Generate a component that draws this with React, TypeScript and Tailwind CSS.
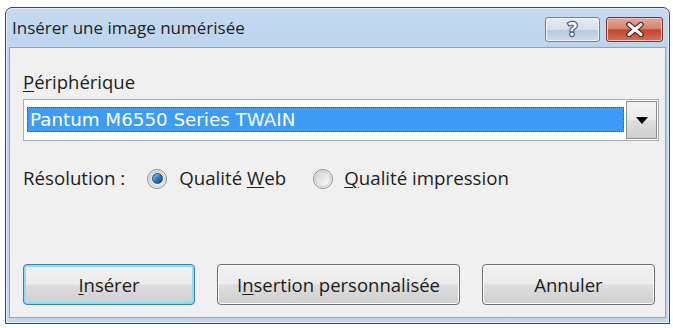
import React from "react";

const ui = { fontFamily: '"Open Sans", "Noto Sans", sans-serif' };
const tahoma = { fontFamily: '"DejaVu Sans", Verdana, sans-serif' };

function Radio({ checked }: { checked?: boolean }) {
  return (
    <span className="flex h-[20px] w-[20px] items-center justify-center rounded-full border border-[#8e8f8f] bg-gradient-to-br from-[#e2e2e2] to-[#f8f8f8]">
      <span className="flex h-[16px] w-[16px] items-center justify-center rounded-full border border-[#c9c9c9] bg-gradient-to-br from-[#d4d4d4] to-[#fdfdfd]">
        {checked && (
          <span className="h-[11px] w-[11px] rounded-full border border-[#174f7f] bg-gradient-to-br from-[#8dd0f8] via-[#2a7fc4] to-[#0f4a80]" />
        )}
      </span>
    </span>
  );
}

function Button({
  children,
  width,
  primary,
}: {
  children: React.ReactNode;
  width: string;
  primary?: boolean;
}) {
  return (
    <div
      className={`${width} flex h-[41px] shrink-0 items-center justify-center rounded-[4px] border ${
        primary ? "border-[#3c7fb1] shadow-[inset_0_0_0_2px_#8fdcf6]" : "border-[#707070] shadow-[inset_0_0_0_1px_#fbfbfb]"
      } bg-[linear-gradient(to_bottom,#f2f2f2_0%,#ebebeb_48%,#dddddd_52%,#cfcfcf_100%)] text-[18.5px] text-[#1c1c1c]`}
      style={ui}
    >
      {children}
    </div>
  );
}

export default function App() {
  return (
    <div className="h-[328px] w-[673px] bg-white pl-[5px] pt-[7px]">
      <div className="flex h-[317px] w-[665px] flex-col rounded-t-[7px] border border-[#34495c] bg-[linear-gradient(to_bottom,#c4daf1,#b8d1ec_20%,#c3d8ee)] px-[3px] pb-[5px] shadow-[inset_0_0_0_1px_#e3eefa]">
        {/* title bar */}
        <div className="flex h-[39px] items-center pl-[3px] pr-[3px]">
          <span className="text-[17px] text-[#1e1e1e]" style={ui}>
            Insérer une image numérisée
          </span>
          <div className="ml-auto flex gap-[6px] self-start pt-[9px]">
            <div className="flex h-[25px] w-[55px] items-center justify-center rounded-[3px] border border-[#6d83a0] bg-[linear-gradient(to_bottom,#e4edf7,#d3dfec_50%,#b9cadf_51%,#cddcec)] shadow-[inset_0_0_0_1px_#f2f6fb]">
              <span
                className="text-[19px] font-bold leading-none text-[#f6f8fb] [paint-order:stroke_fill] [-webkit-text-stroke:2.4px_#4a5c74]"
                style={ui}
              >
                ?
              </span>
            </div>
            <div className="flex h-[25px] w-[57px] items-center justify-center rounded-[3px] border border-[#7a3535] bg-[linear-gradient(to_bottom,#e8a594,#d98571_45%,#c4442d_52%,#d4705a)] shadow-[inset_0_0_0_1px_#f0c4b8]">
              <svg width="20" height="15" viewBox="0 0 20 15">
                <path d="M4 2.5 L16 12.5 M16 2.5 L4 12.5" stroke="#4d1b14" strokeWidth="5.5" strokeLinecap="round" />
                <path d="M4 2.5 L16 12.5 M16 2.5 L4 12.5" stroke="#ffffff" strokeWidth="3.2" strokeLinecap="round" />
              </svg>
            </div>
          </div>
        </div>

        {/* client area */}
        <div className="flex flex-1 flex-col border border-[#8aa5c1] bg-[#f0f0f0] pl-[13px] pr-[6px]">
          <div className="mt-[22px] text-[18.5px] leading-[24px] text-[#1e1e1e]" style={ui}>
            <span className="underline decoration-1 underline-offset-2">P</span>ériphérique
          </div>

          <div className="mt-[5px] flex h-[42px] items-start border border-[#abadb3] bg-white p-[3px]">
            <div
              className="mt-[4px] flex h-[25px] flex-1 items-center border border-dotted border-[#555] bg-[#3d9cf5] pl-[2px] text-[18.3px] text-white"
              style={tahoma}
            >
              Pantum M6550 Series TWAIN
            </div>
            <div className="-mr-[2px] -mt-[2px] ml-[2px] flex h-[38px] w-[31px] items-center justify-center border border-[#8f8f8f] bg-[linear-gradient(to_bottom,#f2f2f2,#ebebeb_48%,#dddddd_52%,#cfcfcf)]">
              <svg width="12" height="7" viewBox="0 0 12 7">
                <path d="M0 0 H12 L6 7 Z" fill="#000" />
              </svg>
            </div>
          </div>

          <div className="mt-[25px] flex h-[25px] items-center text-[18.7px] text-[#1e1e1e]" style={ui}>
            <span>Résolution :</span>
            <span className="ml-[22px]">
              <Radio checked />
            </span>
            <span className="ml-[12px]">
              Qualité <span className="underline decoration-1 underline-offset-2">W</span>eb
            </span>
            <span className="ml-[27px]">
              <Radio />
            </span>
            <span className="ml-[11px]">
              <span className="underline decoration-1 underline-offset-2">Q</span>ualité impression
            </span>
          </div>

          <div className="mb-[12px] mt-auto flex gap-[22px]">
            <Button width="w-[172px]" primary>
              <span>
                <span className="underline decoration-1 underline-offset-2">I</span>nsérer
              </span>
            </Button>
            <Button width="w-[243px]">
              <span>
                I<span className="underline decoration-1 underline-offset-2">n</span>sertion personnalisée
              </span>
            </Button>
            <Button width="w-[173px]">Annuler</Button>
          </div>
        </div>
      </div>
    </div>
  );
}
